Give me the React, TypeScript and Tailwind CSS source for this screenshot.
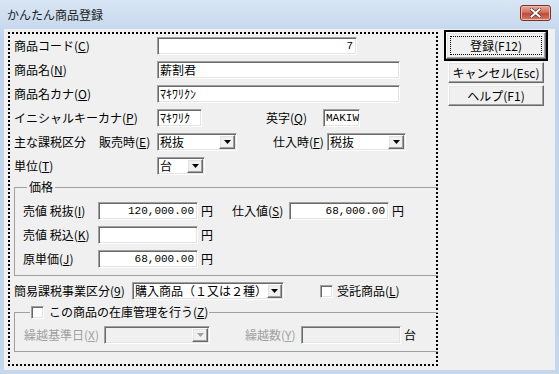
import React from 'react';

// 共通スタイル
const JP = "font-['Noto_Sans_CJK_JP',sans-serif]";
const MONO = "font-['Liberation_Mono','Noto_Sans_CJK_JP',monospace] text-[11px]";
const SUNKEN =
  'h-[18px] flex items-center border border-t-[#a0a0a0] border-l-[#a0a0a0] border-r-white border-b-white shadow-[inset_1px_1px_0_#696969,inset_-1px_-1px_0_#e3e3e3]';
const RAISED =
  'bg-[#f0f0f0] border border-t-white border-l-white border-r-[#696969] border-b-[#696969] shadow-[inset_-1px_-1px_0_#a0a0a0,inset_1px_1px_0_#e3e3e3]';

// ニーモニック付きラベル
function L({ text, k, after = ')' , className = '' }: { text: string; k: string; after?: string; className?: string }) {
  return (
    <span className={`whitespace-nowrap ${className}`}>
      {text}(<span className="underline underline-offset-[1px]">{k}</span>{after}
    </span>
  );
}

function Field({ className = '', children, right, disabled }: { className?: string; children?: React.ReactNode; right?: boolean; disabled?: boolean }) {
  return (
    <div
      className={`${SUNKEN} ${disabled ? 'bg-[#f0f0f0]' : 'bg-white'} ${right ? 'justify-end pr-[3px]' : 'pl-[2px]'} ${className}`}
    >
      {children}
    </div>
  );
}

function Arrow({ disabled }: { disabled?: boolean }) {
  return (
    <div className={`${RAISED} ml-auto mr-[1px] w-[16px] h-[14px] flex items-center justify-center`}>
      <svg width="7" height="4" viewBox="0 0 7 4">
        <path d="M0 0h7L3.5 4z" fill={disabled ? '#a0a0a0' : '#000'} />
      </svg>
    </div>
  );
}

function Select({ className = '', value, disabled }: { className?: string; value?: string; disabled?: boolean }) {
  return (
    <div className={`${SUNKEN} ${disabled ? 'bg-[#f0f0f0]' : 'bg-white'} pl-[2px] ${className}`}>
      <span className="whitespace-nowrap">{value}</span>
      <Arrow disabled={disabled} />
    </div>
  );
}

function Check() {
  return (
    <div className="w-[13px] h-[13px] bg-white border border-t-[#a0a0a0] border-l-[#a0a0a0] border-r-white border-b-white shadow-[inset_1px_1px_0_#696969,inset_-1px_-1px_0_#e3e3e3]" />
  );
}

export default function App() {
  return (
    <div className={`w-[559px] h-[374px] flex flex-col bg-[linear-gradient(#d9e6f4,#bfd3ea_40px,#c4d7ec)] text-[12px] leading-[16px] text-black ${JP}`}>
      {/* タイトルバー */}
      <div className="h-[29px] flex items-center justify-between pl-[7px] pr-[8px] shrink-0">
        <span className="text-[12px] text-[#1a1a1a]">かんたん商品登録</span>
        <div className="mb-[4px] w-[31px] h-[16px] rounded-[3px] border border-[#7a2f2a] bg-[linear-gradient(#e9a99a,#d0705f_45%,#c04a38_55%,#d77a62)] flex items-center justify-center shadow-[inset_0_0_0_1px_#f0b8a8]">
          <svg width="11" height="10" viewBox="0 0 11 10">
            <path d="M1.5 1.5l8 7M9.5 1.5l-8 7" stroke="#5a2a25" strokeWidth="3.4" strokeLinecap="square" />
            <path d="M1.5 1.5l8 7M9.5 1.5l-8 7" stroke="#fff" strokeWidth="2" strokeLinecap="square" />
          </svg>
        </div>
      </div>

      {/* 本体 */}
      <div className="flex-1 mx-[4px] mb-[4px] bg-[#f0f0f0] flex items-start pl-[4px]">
        {/* 入力エリア */}
        <div className="mt-[3px] w-[430px] h-[334px] border-2 border-dotted border-black pl-[4px] flex flex-col">
          <div className="mt-[3px] flex flex-col gap-[6px]">
            <div className="h-[18px] flex items-center">
              <L className="w-[143px]" text="商品コード" k="C" />
              <Field className={`w-[200px] ${MONO}`} right>7</Field>
            </div>
            <div className="h-[18px] flex items-center">
              <L className="w-[143px]" text="商品名" k="N" />
              <Field className="w-[243px]">薪割君</Field>
            </div>
            <div className="h-[18px] flex items-center">
              <L className="w-[143px]" text="商品名カナ" k="O" />
              <Field className="w-[243px]">ﾏｷﾜﾘｸﾝ</Field>
            </div>
            <div className="h-[18px] flex items-center">
              <L className="w-[143px]" text="イニシャルキーカナ" k="P" />
              <Field className="w-[45px]">ﾏｷﾜﾘｸ</Field>
              <L className="ml-[64px] w-[57px]" text="英字" k="Q" />
              <Field className={`w-[37px] ${MONO}`}>MAKIW</Field>
            </div>
            <div className="h-[18px] flex items-center">
              <div className="w-[143px] flex">
                <span className="w-[85px]">主な課税区分</span>
                <L text="販売時" k="E" />
              </div>
              <Select className="w-[80px]" value="税抜" />
              <L className="ml-[36px] w-[54px]" text="仕入時" k="F" />
              <Select className="w-[79px]" value="税抜" />
            </div>
            <div className="h-[18px] flex items-center">
              <L className="w-[143px]" text="単位" k="T" />
              <Select className="w-[48px]" value="台" />
            </div>
          </div>

          {/* 価格 */}
          <fieldset className="mt-[4px] mr-[-2px] border border-r-0 border-[#a0a0a0] pl-[8px] pb-[7px]">
            <legend className="ml-[4px] px-[2px]">価格</legend>
            <div className="mt-[7px] flex flex-col gap-[6px]">
              <div className="h-[18px] flex items-center">
                <L className="w-[75px]" text="売値 税抜" k="I" />
                <Field className={`w-[100px] ${MONO}`} right>120,000.00</Field>
                <span className="ml-[3px] w-[31px]">円</span>
                <L className="w-[57px]" text="仕入値" k="S" />
                <Field className={`w-[100px] ${MONO}`} right>68,000.00</Field>
                <span className="ml-[3px]">円</span>
              </div>
              <div className="h-[18px] flex items-center">
                <L className="w-[75px]" text="売値 税込" k="K" />
                <Field className="w-[100px]" right />
                <span className="ml-[3px]">円</span>
              </div>
              <div className="h-[18px] flex items-center">
                <L className="w-[75px]" text="原単価" k="J" />
                <Field className={`w-[100px] ${MONO}`} right>68,000.00</Field>
                <span className="ml-[3px]">円</span>
              </div>
            </div>
          </fieldset>

          {/* 簡易課税 */}
          <div className="mt-[6px] h-[18px] flex items-center">
            <L className="w-[118px]" text="簡易課税事業区分" k="9" />
            <Select className="w-[152px]" value="購入商品（１又は２種）" />
            <div className="ml-[36px] flex items-center gap-[4px]">
              <Check />
              <L text="受託商品" k="L" />
            </div>
          </div>

          {/* 在庫管理 */}
          <fieldset className="mt-[4px] mr-[-2px] border border-r-0 border-[#a0a0a0] pl-[9px] pb-[7px]">
            <legend className="ml-[6px] px-[1px] flex items-center gap-[5px]">
              <Check />
              <L text="この商品の在庫管理を行う" k="Z" />
            </legend>
            <div className="mt-[6px] h-[18px] flex items-center text-[#a0a0a0]">
              <L className="w-[80px]" text="繰越基準日" k="X" />
              <Select className="w-[106px]" disabled />
              <L className="ml-[35px] w-[56px]" text="繰越数" k="Y" />
              <Field className="w-[100px]" disabled />
              <span className="ml-[3px] text-black">台</span>
            </div>
          </fieldset>
        </div>

        {/* ボタン */}
        <div className="ml-[6px] mt-[1px] flex flex-col">
          <div className="w-[104px] h-[31px] border-2 border-black">
            <div className={`${RAISED} w-full h-full p-[3px]`}>
              <div className="w-full h-full border border-dotted border-black flex items-center justify-center">
                登録(F12)
              </div>
            </div>
          </div>
          <div className={`${RAISED} ml-[4px] mt-[1px] w-[96px] h-[21px] flex items-center justify-center`}>
            キャンセル(Esc)
          </div>
          <div className={`${RAISED} ml-[4px] mt-[2px] w-[96px] h-[21px] flex items-center justify-center`}>
            ヘルプ(F1)
          </div>
        </div>
      </div>
    </div>
  );
}
